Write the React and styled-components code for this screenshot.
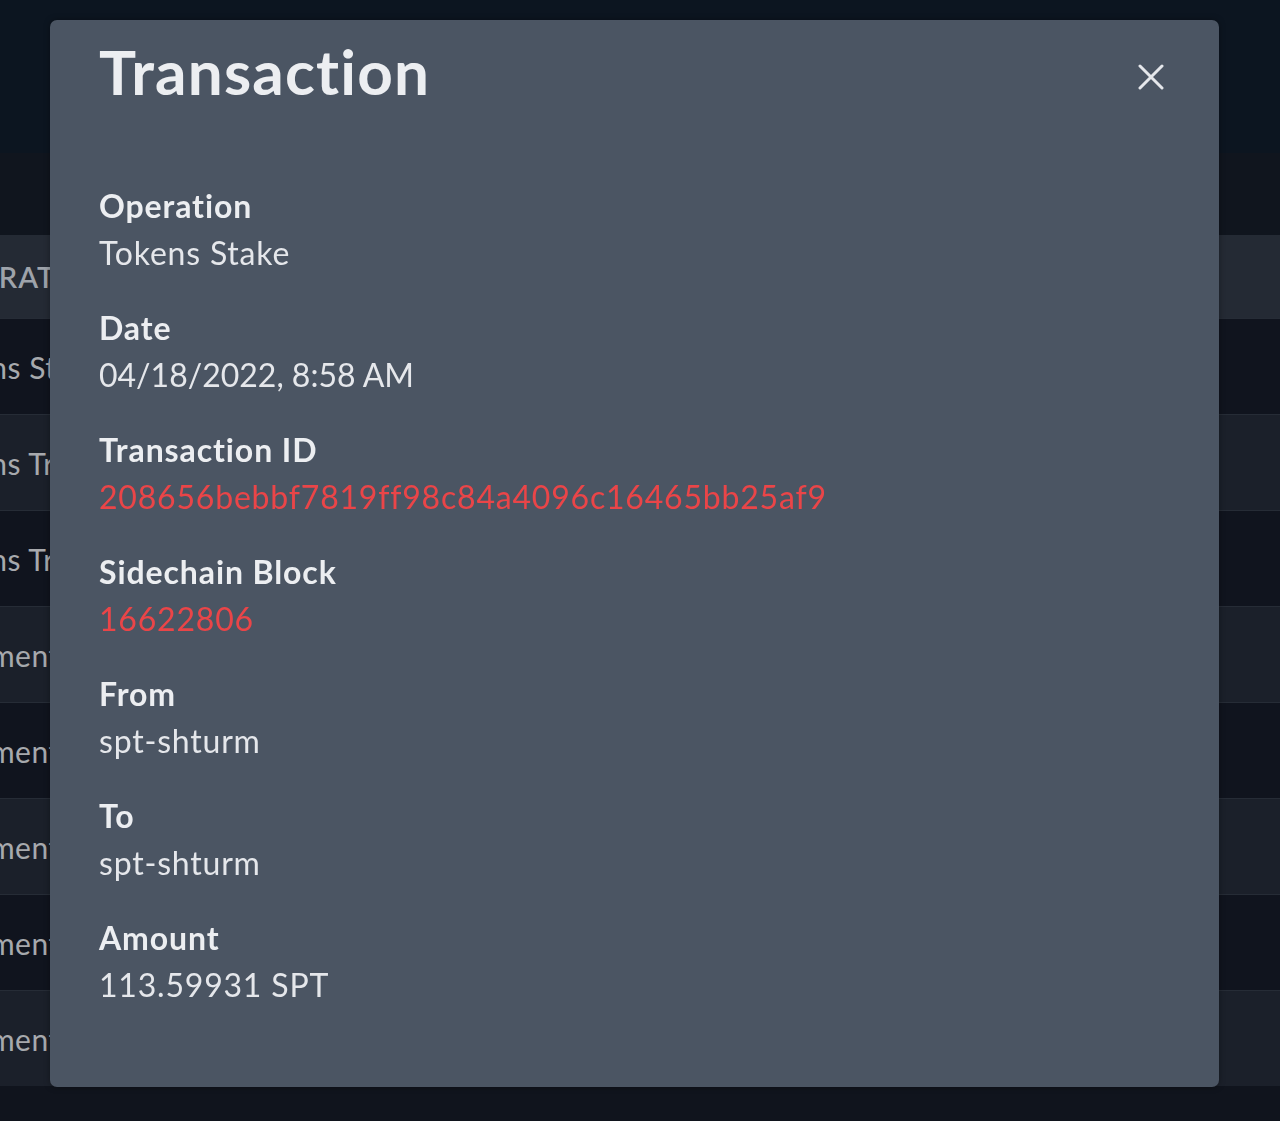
import React from "react";
import styled, { createGlobalStyle } from "styled-components";

const GlobalStyle = createGlobalStyle`
  html, body {
    margin: 0;
    padding: 0;
    background: #0f141d;
    font-family: Lato, "Open Sans", sans-serif;
    overflow: hidden;
  }
`;

const rows = [
  "Tokens Stake",
  "Tokens Transfer",
  "Tokens Transfer",
  "Comments",
  "Comments",
  "Comments",
  "Comments",
  "Comments",
];

const details = [
  { label: "Operation", value: "Tokens Stake" },
  { label: "Date", value: "04/18/2022, 8:58 AM", tight: true },
  { label: "Transaction ID", value: "208656bebbf7819ff98c84a4096c16465bb25af9", link: true },
  { label: "Sidechain Block", value: "16622806", link: true },
  { label: "From", value: "spt-shturm" },
  { label: "To", value: "spt-shturm" },
  { label: "Amount", value: "113.59931 SPT" },
];

function App() {
  return (
    <>
      <GlobalStyle />
      <Page>
        <TopBar />
        <SubBar />
        <Table>
          <HeadRow>
            <Cell>Operation</Cell>
          </HeadRow>
          {rows.map((r, i) => (
            <Row key={i} $odd={i % 2 === 1}>
              <Cell $body>{r}</Cell>
            </Row>
          ))}
        </Table>
      </Page>

      <Modal>
        <ModalHeader>
          <Title>Transaction</Title>
          <CloseButton aria-label="Close">
            <svg width="26" height="26" viewBox="0 0 26 26">
              <path
                d="M2 2 L24 24 M24 2 L2 24"
                stroke="#e5e7eb"
                strokeWidth="3"
                strokeLinecap="round"
              />
            </svg>
          </CloseButton>
        </ModalHeader>
        <Details>
          {details.map((d) => (
            <Field key={d.label}>
              <Label>{d.label}</Label>
              <Value $link={d.link} $tight={d.tight}>
                {d.value}
              </Value>
            </Field>
          ))}
        </Details>
      </Modal>
    </>
  );
}

const Page = styled.div`
  height: 1121px;
  display: flex;
  flex-direction: column;
  background: #10141d;
`;

const TopBar = styled.div`
  height: 153px;
  background: #0c1520;
`;

const SubBar = styled.div`
  height: 82px;
  background: #10151e;
`;

const Table = styled.div`
  display: flex;
  flex-direction: column;
`;

const HeadRow = styled.div`
  height: 83px;
  display: flex;
  align-items: center;
  background: #242a34;
`;

const Row = styled.div`
  height: 95px;
  display: flex;
  align-items: center;
  background: ${({ $odd }) => ($odd ? "#1b202a" : "#10141e")};
  border-top: 1px solid #262c36;
`;

const Cell = styled.div`
  margin-left: ${({ $body }) => ($body ? "-73px" : "-62px")};
  font-size: ${({ $body }) => ($body ? "30px" : "29px")};
  font-weight: ${({ $body }) => ($body ? 400 : 600)};
  text-transform: ${({ $body }) => ($body ? "none" : "uppercase")};
  letter-spacing: ${({ $body }) => ($body ? "0.5px" : "1px")};
  color: ${({ $body }) => ($body ? "#a7a9ad" : "#9ea3aa")};
  white-space: nowrap;
`;

const Modal = styled.div`
  position: fixed;
  left: 50px;
  top: 20px;
  width: 1169px;
  height: 1067px;
  box-sizing: border-box;
  padding: 14px 49px 0 49px;
  background: #4b5563;
  border-radius: 7px;
  box-shadow: 0 0 6px rgba(0, 0, 0, 0.35);
  display: flex;
  flex-direction: column;
`;

const ModalHeader = styled.div`
  display: flex;
  justify-content: space-between;
  align-items: center;
`;

const Title = styled.h2`
  margin: 0;
  font-size: 62px;
  font-weight: 700;
  line-height: 1.2;
  letter-spacing: 1.2px;
  color: #eceef1;
`;

const CloseButton = styled.button`
  margin: 12px 6px 0 0;
  padding: 0;
  border: 0;
  background: none;
  display: flex;
  cursor: pointer;
`;

const Details = styled.div`
  margin-top: 74px;
  display: flex;
  flex-direction: column;
  gap: 28px;
`;

const Field = styled.div`
  display: flex;
  flex-direction: column;
`;

const Label = styled.div`
  font-size: 32px;
  font-weight: 700;
  line-height: 47px;
  letter-spacing: 0.9px;
  color: #eceef1;
`;

const Value = styled.div`
  font-size: 32px;
  font-weight: 400;
  line-height: 47px;
  letter-spacing: ${({ $tight }) => ($tight ? "0" : "0.8px")};
  color: ${({ $link }) => ($link ? "#ea4548" : "#e5e7eb")};
`;

export default App;
